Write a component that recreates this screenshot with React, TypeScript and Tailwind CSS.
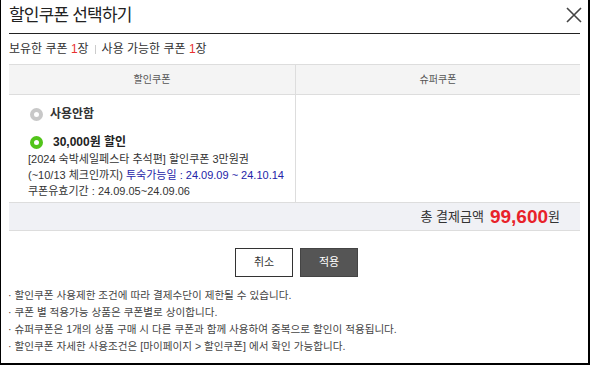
import { useState } from "react";

const font = {
  fontFamily: '"Liberation Sans", "Noto Sans CJK KR", sans-serif',
};

const notes = [
  "할인쿠폰 사용제한 조건에 따라 결제수단이 제한될 수 있습니다.",
  "쿠폰 별 적용가능 상품은 쿠폰별로 상이합니다.",
  "슈퍼쿠폰은 1개의 상품 구매 시 다른 쿠폰과 함께 사용하여 중복으로 할인이 적용됩니다.",
  "할인쿠폰 자세한 사용조건은 [마이페이지 > 할인쿠폰] 에서 확인 가능합니다.",
];

function Radio({ checked }: { checked: boolean }) {
  return checked ? (
    <span className="w-[13px] h-[13px] rounded-full border-[4px] border-[#52c41a] bg-white shrink-0" />
  ) : (
    <span className="w-[13px] h-[13px] rounded-full border-[4px] border-[#c8c8c8] bg-white shrink-0" />
  );
}

export default function App() {
  const [selected, setSelected] = useState("coupon");

  return (
    <div
      className="w-[590px] h-[365px] bg-white border-l border-r-2 border-b-2 border-black text-[#222] overflow-hidden"
      style={font}
    >
      <div className="mx-2">
        <div className="flex items-center justify-between h-[34px] border-b border-[#222]">
          <h1 className="text-[17px] tracking-[-0.8px] leading-none mt-[-3px]">할인쿠폰 선택하기</h1>
          <button className="w-[18px] h-[18px] mr-[-3px] mt-[-4px]">
            <svg viewBox="0 0 18 18" className="w-[18px] h-[18px]">
              <path d="M2 2 L16 16 M16 2 L2 16" stroke="#444" strokeWidth="1.6" fill="none" />
            </svg>
          </button>
        </div>

        <div className="flex items-center h-[30px] text-[12px] text-[#333]">
          <span>
            보유한 쿠폰 <span className="text-[#e8312f]">1</span>장
          </span>
          <span className="mx-[6px] w-px h-[9px] bg-[#ccc]" />
          <span>
            사용 가능한 쿠폰 <span className="text-[#e8312f]">1</span>장
          </span>
        </div>

        <div className="border-t border-[#ddd]">
          <div className="grid grid-cols-[287px_1fr] h-[30px] bg-[#f4f4f4] border-b border-[#ddd] text-[10px] text-[#555]">
            <div className="flex items-center justify-center border-r border-[#ddd]">할인쿠폰</div>
            <div className="flex items-center justify-center">슈퍼쿠폰</div>
          </div>
          <div className="grid grid-cols-[287px_1fr] h-[108px] border-b border-[#ddd]">
            <div className="border-r border-[#ddd] pl-[21px] pt-[12px] text-[12px]">
              <label
                className="flex items-center gap-[7px] h-[14px] cursor-pointer"
                onClick={() => setSelected("none")}
              >
                <Radio checked={selected === "none"} />
                <span className="font-bold text-[#333]">사용안함</span>
              </label>
              <label
                className="flex items-center gap-[10px] h-[14px] mt-[14px] cursor-pointer"
                onClick={() => setSelected("coupon")}
              >
                <Radio checked={selected === "coupon"} />
                <span className="font-bold text-[#222]">30,000원 할인</span>
              </label>
              <div className="ml-[-2px] mt-[2px] text-[11px] leading-[16px] text-[#333]">
                <div>[2024 숙박세일페스타 추석편] 할인쿠폰 3만원권</div>
                <div>
                  (~10/13 체크인까지){" "}
                  <span className="text-[#2323a8]">투숙가능일 : 24.09.09 ~ 24.10.14</span>
                </div>
                <div>쿠폰유효기간 : 24.09.05~24.09.06</div>
              </div>
            </div>
            <div />
          </div>
          <div className="flex items-center justify-end h-[28px] bg-[#f0f1f5] border-b border-[#ddd] pr-[20px] text-[13px] text-[#333]">
            <span>총 결제금액</span>
            <span className="ml-[6px] text-[19px] font-bold text-[#e8222a] leading-none">99,600</span>
            <span>원</span>
          </div>
        </div>

        <div className="flex justify-center gap-[7px] mt-[17px] pl-[4px]">
          <button className="w-[58px] h-[29px] border border-[#333] bg-white text-[11px] text-[#333]">
            취소
          </button>
          <button className="w-[58px] h-[29px] bg-[#555] border border-[#444] text-[11px] text-white">
            적용
          </button>
        </div>

        <ul className="mt-[10px] ml-[-1px] text-[10.6px] leading-[17px] text-[#444]">
          {notes.map((n) => (
            <li key={n}>· {n}</li>
          ))}
        </ul>
      </div>
    </div>
  );
}
